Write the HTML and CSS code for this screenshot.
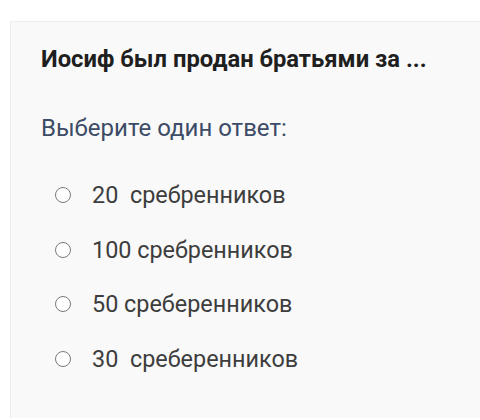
FILE: index.html
```html
<!DOCTYPE html>
<html lang="ru">
<head>
<meta charset="utf-8">
<link rel="stylesheet" href="styles.css">
</head>
<body>
<div class="card">
  <h2 class="question">Иосиф был продан братьями за ...</h2>
  <p class="prompt">Выберите один ответ:</p>
  <ul class="answers">
    <li class="answer"><span class="radio"></span><span class="label">20  сребренников</span></li>
    <li class="answer"><span class="radio"></span><span class="label">100 сребренников</span></li>
    <li class="answer"><span class="radio"></span><span class="label">50 сребеpенников</span></li>
    <li class="answer"><span class="radio"></span><span class="label">30  сребеpенников</span></li>
  </ul>
</div>
</body>
</html>
```

FILE: styles.css
```css
html, body {
  margin: 0;
  padding: 0;
  background: #ffffff;
}
body {
  font-family: Roboto, "Liberation Sans", sans-serif;
  width: 480px;
  height: 420px;
  overflow: hidden;
}
.card {
  margin: 21px 0 0 10px;
  background: #f9f9f9;
  border: 1px solid #eeeeee;
  border-right: none;
  border-bottom: none;
  padding: 23px 0 0 30px;
  height: 397px;
  box-sizing: border-box;
  overflow: hidden;
}
.question {
  margin: 0;
  font-size: 23.8px;
  line-height: 28px;
  font-weight: 700;
  color: #1f1f1f;
}
.prompt {
  margin: 41px 0 0 0;
  font-size: 24px;
  line-height: 28px;
  color: #3c4b66;
}
.answers {
  list-style: none;
  margin: 39px 0 0 0;
  padding: 0 0 0 14px;
  display: flex;
  flex-direction: column;
  gap: 26.5px;
}
.answer {
  display: flex;
  align-items: center;
  gap: 21px;
  height: 28px;
}
.radio {
  width: 14px;
  height: 14px;
  border: 1.5px solid #7a7a7a;
  border-radius: 50%;
  background: #ffffff;
  flex: none;
}
.label {
  white-space: pre;
  font-size: 23.4px;
  line-height: 28px;
  color: #3d3d3d;
}
```
